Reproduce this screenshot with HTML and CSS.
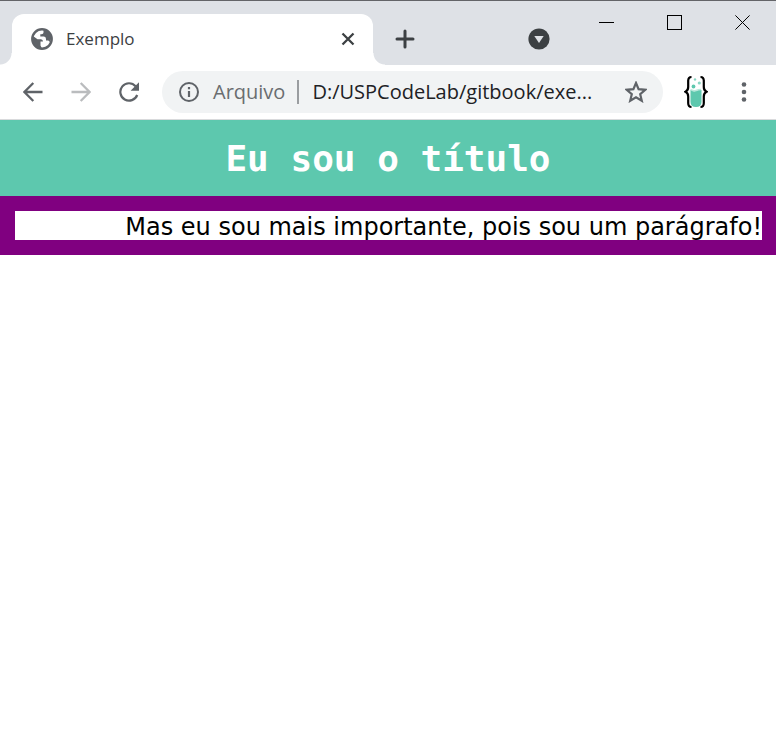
FILE: index.html
```html
<!DOCTYPE html>
<html lang="pt-BR">
<head>
<meta charset="utf-8">
<meta name="viewport" content="width=device-width, initial-scale=1">
<title>Exemplo</title>
<link rel="stylesheet" href="styles.css">
</head>
<body>
<header class="browser">
  <div class="tab-strip">
    <div class="tab">
      <svg class="tab-icon" viewBox="0 0 22 22" aria-hidden="true">
        <circle cx="11" cy="11" r="9.7" fill="#fff" stroke="#5f6368" stroke-width="2.4"/>
        <path fill="#5f6368" d="M2 8 L6.5 11.2 H10 Q12 11.5 12 13.5 H9.5 V17.5 L11 20.5 Q4 20.5 2 14Z"/>
        <path fill="#5f6368" d="M12.5 1.5 V4.5 Q12.5 6.2 10.5 6.2 H9.3 V8.5 H13 Q15 8.6 15 11 V12.5 H17 Q18.5 12.7 18.8 14.5 Q22 8 18.5 4.5 Q16 1.7 12.5 1.5Z"/>
      </svg>
      <span class="tab-title">Exemplo</span>
      <button class="icon-button tab-close" type="button" aria-label="Fechar guia">
        <svg class="glyph-small" viewBox="0 0 14 14"><path d="M1.5 1.5 12.5 12.5M12.5 1.5 1.5 12.5" fill="none" stroke="#3c4043" stroke-width="2.3"/></svg>
      </button>
    </div>
    <button class="icon-button new-tab" type="button" aria-label="Nova guia">
      <svg class="glyph" viewBox="0 0 20 20"><path d="M10 2V18M2 10H18" fill="none" stroke="#3c4043" stroke-width="3" stroke-linecap="round"/></svg>
    </button>
    <button class="icon-button tab-search" type="button" aria-label="Pesquisar guias">
      <svg class="glyph-large" viewBox="0 0 22 22"><circle cx="11" cy="11" r="10.6" fill="#3c4043"/><path d="M6.3 8H15.7L11 15Z" fill="#dee1e6"/></svg>
    </button>
    <div class="window-controls">
      <button class="window-button" type="button" aria-label="Minimizar">
        <svg class="glyph-window" viewBox="0 0 15 15"><path d="M0 7.5H15" stroke="#000" fill="none"/></svg>
      </button>
      <button class="window-button" type="button" aria-label="Maximizar">
        <svg class="glyph-window" viewBox="0 0 15 15"><rect x=".5" y=".5" width="14" height="14" stroke="#000" fill="none"/></svg>
      </button>
      <button class="window-button" type="button" aria-label="Fechar">
        <svg class="glyph-window" viewBox="0 0 15 15"><path d="M.4.4 14.6 14.6M14.6.4.4 14.6" stroke="#000" fill="none"/></svg>
      </button>
    </div>
  </div>
  <nav class="toolbar" aria-label="Navegação">
    <button class="icon-button" type="button" aria-label="Voltar">
      <svg class="glyph" viewBox="0 0 20 20"><path d="M19.5 10H2M10.3 1 1.4 10 10.3 19" fill="none" stroke="#5f6368" stroke-width="2.3"/></svg>
    </button>
    <button class="icon-button" type="button" aria-label="Avançar">
      <svg class="glyph" viewBox="0 0 20 20"><path d="M.5 10H18M9.7 1 18.6 10 9.7 19" fill="none" stroke="#babcbe" stroke-width="2.3"/></svg>
    </button>
    <button class="icon-button" type="button" aria-label="Recarregar">
      <svg class="glyph" viewBox="0 0 20 20"><path d="M16.6 4.2A8.7 8.7 0 1 0 18.2 13" fill="none" stroke="#5f6368" stroke-width="2.2"/><path d="M20 .2V8.8H11.6Z" fill="#5f6368"/></svg>
    </button>
    <div class="omnibox">
      <svg class="glyph" viewBox="0 0 20 20" aria-hidden="true"><circle cx="10" cy="10" r="9" fill="none" stroke="#5f6368" stroke-width="2"/><path d="M10 9V15M10 5V7.2" stroke="#5f6368" stroke-width="2.2"/></svg>
      <label class="scheme" for="address">Arquivo</label>
      <input class="address" id="address" type="text" value="D:/USPCodeLab/gitbook/exe...">
      <button class="icon-button bookmark" type="button" aria-label="Adicionar aos favoritos">
        <svg class="glyph-large" viewBox="1 1 22 22"><path d="M12 3 14.6 9.2 21.3 9.8 16.2 14.2 17.8 20.8 12 17.3 6.2 20.8 7.8 14.2 2.7 9.8 9.4 9.2Z" fill="none" stroke="#5f6368" stroke-width="2.2"/></svg>
      </button>
    </div>
    <button class="icon-button" type="button" aria-label="USPCodeLab">
      <svg class="extension" viewBox="0 0 24 34">
        <path d="M7.5 2Q4.2 2 4.2 6V12Q4.200 15.500 1.500 16.800Q4.200 18 4.200 21.500V28Q4.200 32 7.500 32M16.500 2Q19.800 2 19.800 6V12Q19.800 15.500 22.500 16.800Q19.800 18 19.800 21.500V28Q19.800 32 16.500 32" fill="none" stroke="#000" stroke-width="2.2"/>
        <path d="M6.500 14.500Q9 17 12 15.700T17.500 15V27Q17.500 32 12 32T6.500 27Z" fill="#5dc8ae"/>
        <path d="M7 14.500Q9.500 16.500 12 15.500T17 14.500" fill="none" stroke="#b9e8dc" stroke-width="1.600"/>
        <circle cx="9.500" cy="11.500" r="1.900" fill="#5dc8ae"/><circle cx="15.300" cy="8" r="1.600" fill="#8ad7c4"/><circle cx="11" cy="4.500" r="1.200" fill="#8ad7c4"/>
      </svg>
    </button>
    <button class="icon-button" type="button" aria-label="Menu">
      <svg class="glyph" viewBox="0 0 20 20"><circle cx="10" cy="2.500" r="2.300" fill="#5f6368"/><circle cx="10" cy="10" r="2.300" fill="#5f6368"/><circle cx="10" cy="17.500" r="2.300" fill="#5f6368"/></svg>
    </button>
  </nav>
</header>
<main>
  <h1 class="title">Eu sou o título</h1>
  <p class="message">Mas eu sou mais importante, pois sou um parágrafo!</p>
</main>
</body>
</html>
```
FILE: styles.css
```css
* {
  box-sizing: border-box;
}

body {
  margin: 0;
  background: #fff;
}

svg {
  display: block;
  flex: none;
}

button {
  padding: 0;
  border: 0;
  background: none;
}

.browser {
  font-family: "Open Sans", "Noto Sans", sans-serif;
}

.tab-strip {
  display: flex;
  align-items: flex-end;
  height: 65px;
  padding-left: 12px;
  border-top: 1px solid #636468;
  background: #dee1e6;
}

.tab {
  position: relative;
  display: flex;
  align-items: center;
  flex: 0 1 361px;
  height: 51px;
  padding: 0 14px 2px 19px;
  border-radius: 12px 12px 0 0;
  background: #fff;
}

.tab::before,
.tab::after {
  content: "";
  position: absolute;
  bottom: 0;
  width: 12px;
  height: 12px;
}

.tab::before {
  right: 100%;
  background: radial-gradient(circle at 0 0, #dee1e6 11px, #fff 12px);
}

.tab::after {
  left: 100%;
  background: radial-gradient(circle at 100% 0, #dee1e6 11px, #fff 12px);
}

.tab-icon,
.glyph-large {
  width: 22px;
  height: 22px;
}

.tab-title {
  flex: 1;
  margin-left: 13px;
  color: #3c4043;
  font-size: 17px;
}

.icon-button {
  display: flex;
  align-items: center;
  justify-content: center;
  flex: none;
  width: 48px;
  height: 48px;
}

.tab-close {
  width: 22px;
  height: 22px;
}

.new-tab,
.tab-search {
  width: 40px;
  height: 51px;
  padding-bottom: 2px;
}

.new-tab {
  margin-left: 12px;
}

.tab-search {
  margin-left: auto;
}

.glyph {
  width: 20px;
  height: 20px;
}

.glyph-small {
  width: 14px;
  height: 14px;
}

.glyph-window {
  width: 15px;
  height: 15px;
}

.window-controls {
  display: flex;
  align-self: flex-start;
  margin-left: 13px;
}

.window-button {
  display: flex;
  align-items: center;
  justify-content: center;
  width: 68px;
  height: 43px;
}

.toolbar {
  display: flex;
  align-items: center;
  height: 55px;
  padding: 0 8px 0 9px;
  border-bottom: 1px solid #d9dadc;
}

.omnibox {
  display: flex;
  align-items: center;
  flex: 1;
  min-width: 0;
  height: 42px;
  margin: 0 9px;
  padding: 0 10px 0 17px;
  border-radius: 21px;
  background: #f1f3f4;
}

.scheme {
  margin-left: 14px;
  padding-right: 12px;
  border-right: 2px solid #9a9da0;
  color: #6a6d70;
  font-size: 20px;
  line-height: 24px;
}

.address {
  flex: 1;
  min-width: 0;
  padding: 0 0 0 13px;
  border: 0;
  background: none;
  color: #202124;
  font: 20px/24px "Open Sans", "Noto Sans", sans-serif;
}

.bookmark {
  width: 34px;
  height: 34px;
}

.extension {
  width: 24px;
  height: 34px;
}

.title {
  margin: 0;
  padding: 19px 18px 17px;
  background: #5dc8ae;
  color: #fff;
  font: bold 36px/40px "DejaVu Sans Mono", monospace;
  text-align: center;
}

.message {
  margin: 0;
  padding-top: 3px;
  border: 15px solid #800080;
  border-right-width: 14px;
  background: #fff;
  color: #000;
  font: 24px/26px "DejaVu Sans", sans-serif;
  text-align: right;
}
```
